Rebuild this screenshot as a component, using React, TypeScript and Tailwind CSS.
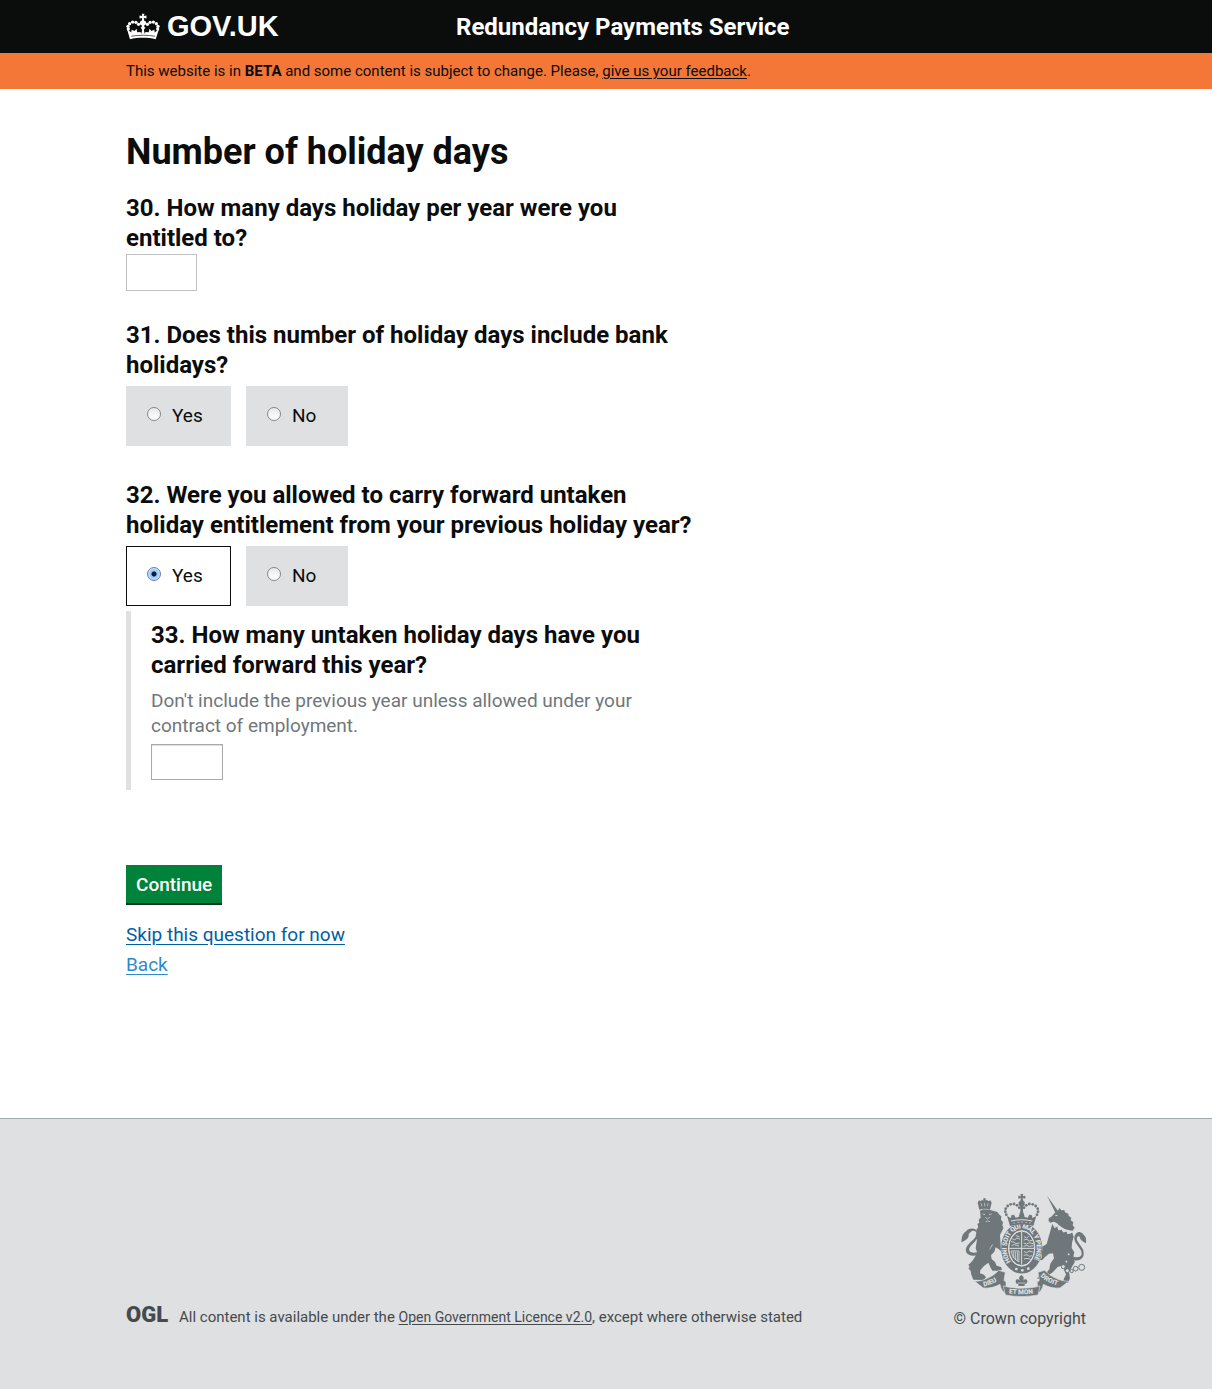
import type { ReactNode } from "react";

function CrownIcon() {
  const pearls = [
    [25, 84], [24, 76], [29, 68], [38, 63], [48, 64], [56, 70],
    [83, 70], [91, 64], [101, 63], [110, 68], [115, 76], [114, 84],
  ];
  return (
    <svg className="h-[27px] w-[34px] shrink-0" viewBox="18 36 103 81" fill="currentColor" aria-hidden="true">
      {pearls.map(([x, y]) => (
        <circle key={`${x}-${y}`} cx={x} cy={y} r="5" />
      ))}
      <path d="M66 38h8l-2 7 8-2v9l-8-1 1 7 5 3c4 6-1 11-5 12l1 8h-9l1-8c-4-1-9-6-5-12l5-3 1-7-8 1v-9l8 2z" />
      <path d="M21 84l13 11 1-9 9 4 6-7 2 11 10-1 2 6 3-12-5-8h15l-5 8 3 12 2-6 10 1 2-11 6 7 9-4 1 9 13-11-10 31c-24-6-54-6-78 0z" />
      <path d="M34 106c23-4 49-4 72 0" fill="none" stroke="#0b0c0c" strokeWidth="2" />
    </svg>
  );
}

function RoyalArms() {
  const bg = "#dee0e2";
  const crownPearls = [
    [169, 89], [166, 80], [167, 71], [173, 63], [182, 58], [192, 57], [201, 61], [208, 68],
    [222, 68], [229, 61], [238, 57], [248, 58], [257, 63], [263, 71], [264, 80], [261, 89],
  ];
  return (
    <svg className="h-[102px] w-[125px] overflow-visible" viewBox="33 27 375 306" fill="currentColor" aria-hidden="true">
      {/* lion */}
      <path d="M83 53l4-7 6 3 3-5 4 3V40h7v7l4-3 4 5 6-3 4 7-5 21c-10-4-22-4-32 0z" />
      <path d="M93 55l3 9M104 54v10M115 55l-3 9" stroke={bg} strokeWidth="2" />
      <path d="M90 77l10-4 18 1 11 3 13 4 7 9 5 4-1 10 6 8-2 9 4 9-1 10 5 8-2 10-7 8 5 12 8 13 4 14-2 12-10-3-5-12-10-10-9-5-4 13-10 11 2 11 10 9 5 11 13 4 3 8-8 3h-21l-5-9-7-15-13 10-11 13-1 9 12 4 6 8-7 8-31-1-6-15-2-11-7-8 4-4-4-7 4-3 8-8 9-14 5-13-4-11 2-13 2-14-4-13 5-7-3-9 6-8-3-9 6-4-2-9 6-6z" />
      <path d="M98 87l7 2M117 89l8-2M106 97l6 5 7-5M107 110l6-2 7 2M128 178l-9 15" stroke={bg} strokeWidth="2" fill="none" />
      <path d="M80 211c-27 5-39-10-29-27 8-13 26-21 28-36 2-12-11-14-17-7l-6 6c2 13-8 18-22 25 1-13 2-26 13-32 9-13 32-14 37 4 4 19-14 28-24 42-8 13 4 20 21 16z" />

      {/* unicorn */}
      <path d="M291 32l35 49-8 6z" />
      <path d="M315 83l9-6 4-8 6 7 9-1 2 7 10 4 1 7 8 5-2 8 8 6-2 9 6 7-6 9c-17 0-34-8-47-22l-9-5-12 3-5-7 2-7 7-4z" />
      <path d="M316 91l6 1" stroke={bg} strokeWidth="3" />
      <path d="M307 116l7 10 9-4 3 12 10-2 3 9 12-3 2 8 14-3 4 13-5 17-1 16 8 13-4 18 6 10-8 14-10 17 3 19-6 14-15-2 3-12 6-11-7-17-7-10-11 4-14 15-19 14-13 6-15 1 2-7 10-6 13-3 11-13 3-17 11-16-3-15-12 1-12 10-9 10-7-2 6-12-11-1-11-8 4-8 12 3 9-2-10-7-13-1-5-10 3-6 13 8 15 3 9-6z" />
      <path d="M308 115l6 13 9-5 3 12 11-3 3 9 11-3 2 8 11-3" fill="none" stroke={bg} strokeWidth="3" />
      <path d="M365 213c24 10 36-1 27-18-7-13-19-22-19-36 1-18 18-25 28-10 8 8 8 13 7 26-8-6-18-9-19-20-7-5-11 4-6 14 6 12 20 23 18 39-2 19-22 23-38 13z" />
      <g fill={bg} stroke="currentColor" strokeWidth="3">
        <circle cx="340" cy="245" r="6" />
        <circle cx="352" cy="257" r="6" />
        <circle cx="365" cy="258" r="5" />
        <circle cx="377" cy="251" r="7" />
        <circle cx="395" cy="247" r="9" />
        <circle cx="356" cy="208" r="4" />
        <circle cx="349" cy="230" r="4" />
      </g>

      {/* shield inside the garter */}
      <path d="M169 112h93l17 38-4 68-31 33-29 14-31-15-30-33-4-67z" fill={bg} />
      <ellipse cx="215" cy="190" rx="51" ry="65" fill="none" stroke="currentColor" strokeWidth="21" />
      <ellipse cx="215" cy="190" rx="38" ry="51" />
      <ellipse cx="215" cy="190" rx="39" ry="52" fill="none" stroke={bg} strokeWidth="3" />
      <path d="M215 140v99M177 190h76" stroke={bg} strokeWidth="3" />
      <g fill="none" stroke={bg} strokeWidth="2.5">
        <path d="M187 161l7 4 6-6 10 3M183 170l8 1 7 5 11-2M185 181l8-2 14 4M197 152l11 3" />
        <path d="M222 155l8 4 6-5M221 165l10-2 7 5 9-2M221 174l9 3 7-4 12 3M221 184l9-3 8 3 11-2" />
        <path d="M183 198c4 17 12 27 24 32V198zM190 200v19M196 200v25M202 200v28" />
        <path d="M222 200l8 3 7-5 11 3M221 211l10-2 7 5 9-2M222 222l9-2 12 3" />
      </g>
      <path id="garter-motto" d="M178 234A51 65 0 1 1 252 234" fill="none" />
      <text fill={bg} fontFamily="Roboto, sans-serif" fontSize="20" fontWeight="900" dominantBaseline="central">
        <textPath href="#garter-motto" startOffset="1">HONI SOIT QUI MAL Y PENSE</textPath>
      </text>
      <g fill={bg}>
        <circle cx="199" cy="252" r="4" />
        <circle cx="217" cy="256" r="4" />
        <circle cx="235" cy="251" r="4" />
      </g>

      {/* central crown */}
      <path d="M179 89c-13-22 13-34 31-16v26h-28zM251 89c13-22-13-34-31-16v26h28z" fill={bg} />
      {crownPearls.map(([x, y]) => (
        <circle key={`${x}-${y}`} cx={x} cy={y} r="4.2" />
      ))}
      <path d="M211 27h9l-2 7 8-2v9l-8-2 2 9 4 3v9l-5 4v19h-8V64l-5-4v-9l5-3 2-9-8 2v-9l8 2z" />
      <path d="M171 93l12 6 1-8 8-2 5 9 9-2 4-14h10l4 14 9 2 5-9 8 2 1 8 12-6-9 30c-22-6-48-6-70 0z" />
      <path d="M183 108c21-5 43-5 64 0" fill="none" stroke={bg} strokeWidth="3" />
      <path d="M190 114h5M202 112h6M214 111h5M226 112h5M237 114h5" stroke={bg} strokeWidth="2" />

      {/* motto ribbon */}
      <g stroke={bg} strokeWidth="2">
        <path d="M74 289c26 0 55-14 72-33l20 6-4 24 6 6v34c-10-4-16-16-18-28-14 8-32 13-50 11z" />
        <path d="M356 289c-26 0-55-14-72-33l-20 6 4 24-6 6v34c10-4 16-16 18-28 14 8 32 13 50 11z" />
        <path d="M160 303c37 9 74 9 110 0l-6 27c-33 6-66 6-98 0z" />
      </g>
      <path d="M168 270l15 4-1 18-12 4zM262 270l-15 4 1 18 12 4z" fill={bg} />
      <path d="M214 270c8 5 9 10 5 17 8-7 13-4 13 2 0 7-6 9-8 7v7h-19v-7c-3 2-8 0-8-7 0-6 6-9 13-2-5-7-3-12 4-17z" />
      <path d="M203 294h23" stroke={bg} strokeWidth="2" />
      <path id="ribbon-left" d="M101 304Q134 299 160 273" fill="none" />
      <path id="ribbon-centre" d="M176 325Q215 331 262 324" fill="none" />
      <path id="ribbon-right" d="M271 274Q296 298 336 304" fill="none" />
      <g fill={bg} fontFamily="Roboto, sans-serif" fontSize="20" fontWeight="900">
        <text><textPath href="#ribbon-left">DIEU</textPath></text>
        <text><textPath href="#ribbon-centre">ET MON</textPath></text>
        <text><textPath href="#ribbon-right">DROIT</textPath></text>
      </g>
    </svg>
  );
}

function Choice({ name, value, width, checked }: { name: string; value: string; width: string; checked?: boolean }) {
  return (
    <label
      className={`${width} flex h-[60px] cursor-pointer items-center gap-[11px] border border-[#dee0e2] bg-[#dee0e2] pl-5 text-[19px] has-[:checked]:border-[#0b0c0c] has-[:checked]:bg-white`}
    >
      <input
        type="radio"
        name={name}
        value={value}
        defaultChecked={checked}
        className="mb-1 size-3.5 appearance-none rounded-full border border-[#858585] bg-linear-to-b from-[#e9e9e9] to-white checked:border-[#6b7bb0] checked:bg-[radial-gradient(circle,#0a1c38_0_2px,#8fc5f5_3px,#c4e4ff_6px)]"
      />
      {value}
    </label>
  );
}

function YesNo({ name, legend, selected }: { name: string; legend: ReactNode; selected?: string }) {
  return (
    <fieldset>
      <legend className="text-2xl/[30px] font-bold">{legend}</legend>
      <div className="mt-1.5 flex gap-[15px]">
        <Choice name={name} value="Yes" width="w-[105px]" checked={selected === "Yes"} />
        <Choice name={name} value="No" width="w-[102px]" checked={selected === "No"} />
      </div>
    </fieldset>
  );
}

export default function App() {
  return (
    <div className="flex min-h-screen flex-col bg-white font-[Roboto,sans-serif] text-[#0b0c0c]">
      <header className="bg-[#0b0c0c] text-white">
        <div className="mx-auto flex h-[53px] max-w-[960px] items-center">
          <div className="w-[330px]">
            <a href="#" className="flex w-fit items-center gap-[7px] font-[Liberation_Sans,sans-serif] text-[29px] font-bold">
              <CrownIcon />
              GOV.UK
            </a>
          </div>
          <span className="text-2xl font-bold">Redundancy Payments Service</span>
        </div>
      </header>
      <div className="bg-[#f47738]">
        <p className="mx-auto h-9 max-w-[960px] text-[15px]/9">
          This website is in <strong>BETA</strong> and some content is subject to change. Please,{" "}
          <a href="#" className="underline underline-offset-2">give us your feedback</a>.
        </p>
      </div>

      <main className="mx-auto w-full max-w-[960px] flex-1 pb-[138px]">
        <form className="max-w-[580px]" onSubmit={(e) => e.preventDefault()}>
          <h1 className="pt-[41px] text-4xl/[45px] font-bold">Number of holiday days</h1>

          <div className="mt-[18px]">
            <label htmlFor="days" className="block max-w-[540px] text-2xl/[30px] font-bold">
              30. How many days holiday per year were you entitled to?
            </label>
            <input id="days" type="text" className="mt-px block h-[37px] w-[71px] border border-[#bfc1c3] px-1 text-[19px]" />
          </div>

          <div className="mt-[29px]">
            <YesNo name="bank" legend="31. Does this number of holiday days include bank holidays?" />
          </div>

          <div className="mt-[34px]">
            <YesNo
              name="carry"
              selected="Yes"
              legend="32. Were you allowed to carry forward untaken holiday entitlement from your previous holiday year?"
            />
          </div>

          <div className="mt-[5px] border-l-[5px] border-[#dee0e2] pt-[9px] pb-2.5 pl-5">
            <label htmlFor="carried" className="block max-w-[500px] text-2xl/[30px] font-bold">
              33. How many untaken holiday days have you carried forward this year?
            </label>
            <p id="carried-hint" className="mt-2 max-w-[500px] text-[19px]/[25px] text-[#6f777b]">
              Don't include the previous year unless allowed under your contract of employment.
            </p>
            <input
              id="carried"
              type="text"
              aria-describedby="carried-hint"
              className="mt-1.5 block h-9 w-[72px] border border-[#aaaaaa] px-1 text-[19px] shadow-[inset_0_1px_1px_#dddddd]"
            />
          </div>

          <button type="submit" className="mt-[75px] block h-10 bg-[#00823b] px-2.5 text-[19px] font-medium text-white shadow-[inset_0_-2px_0_#003618]">
            Continue
          </button>
          <div className="mt-[15px] text-[19px]/[30px]">
            <a href="#" className="block w-fit text-[#005ea5] underline underline-offset-3">Skip this question for now</a>
            <a href="#" className="block w-fit text-[#2e8aca] underline underline-offset-3">Back</a>
          </div>
        </form>
      </main>

      <footer className="border-t border-[#a1acb2] bg-[#dee0e2] pt-[75px] pb-[60px] text-[#454a4c]">
        <div className="mx-auto flex max-w-[960px] items-end justify-between text-[15px]/5">
          <div className="flex items-center gap-3">
            <span className="w-[41px] pb-1 text-[22px]/5 font-black">OGL</span>
            <p>
              All content is available under the{" "}
              <a href="#" className="text-sm underline underline-offset-2">Open Government Licence v2.0</a>
              , except where otherwise stated
            </p>
          </div>
          <div className="flex flex-col items-end gap-[13px] text-[#6f777b]">
            <RoyalArms />
            <a href="#" className="text-base/5 text-[#454a4c]">© Crown copyright</a>
          </div>
        </div>
      </footer>
    </div>
  );
}
